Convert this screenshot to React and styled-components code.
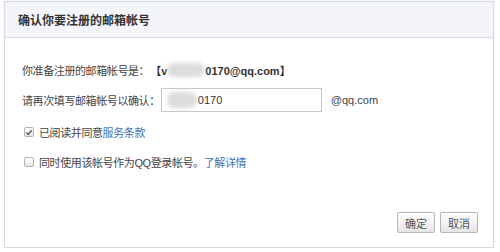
import React from "react";
import styled, { createGlobalStyle, css } from "styled-components";

const GlobalStyle = createGlobalStyle`
  html, body {
    margin: 0;
    padding: 0;
    background: #fff;
  }
  body {
    font-family: "Liberation Sans", "Noto Sans CJK SC", sans-serif;
    font-size: 11px;
    color: #333;
  }
`;

const App = () => {
  return (
    <>
      <GlobalStyle />
      <Dialog>
        <Header>
          <Title>确认你要注册的邮箱帐号</Title>
        </Header>
        <Body>
          <Row top={22}>
            <Label>你准备注册的邮箱帐号是：</Label>
            <Strong>
              【v<Blob w={38} />0170@qq.com】
            </Strong>
          </Row>
          <Row top={8}>
            <Label>请再次填写邮箱帐号以确认：</Label>
            <InputBox>
              <Blob w={30} h={16} />
              0170
            </InputBox>
            <Suffix>@qq.com</Suffix>
          </Row>
          <Row top={10} indent>
            <Check checked>
              <svg width="9" height="9" viewBox="0 0 9 9">
                <path d="M1.5 4.6 L3.6 6.7 L7.6 2" fill="none" stroke="#555" strokeWidth="1.5" />
              </svg>
            </Check>
            <Label>
              已阅读并同意<Link>服务条款</Link>
            </Label>
          </Row>
          <Row top={10} indent>
            <Check />
            <Label>
              同时使用该帐号作为QQ登录帐号。<Link>了解详情</Link>
            </Label>
          </Row>
          <Footer>
            <Button>确定</Button>
            <Button>取消</Button>
          </Footer>
        </Body>
      </Dialog>
    </>
  );
};

export default App;

const Dialog = styled.div`
  box-sizing: border-box;
  margin: 1px 0 0 4px;
  width: 490px;
  height: 247px;
  border: 1px solid #d6dae3;
  box-shadow: 0 0 1px rgba(180, 186, 200, 0.6);
  display: flex;
  flex-direction: column;
  background: #fff;
`;

const Header = styled.div`
  height: 35px;
  background: #f4f5f8;
  border-bottom: 1px solid #d8dde7;
  display: flex;
  align-items: center;
  padding-left: 13px;
`;

const Title = styled.div`
  font-family: "Noto Sans CJK SC", sans-serif;
  font-size: 12px;
  font-weight: bold;
  color: #333;
`;

const Body = styled.div`
  flex: 1;
  display: flex;
  flex-direction: column;
  padding: 0 15px 14px 17px;
`;

const Row = styled.div`
  display: flex;
  align-items: center;
  min-height: 20px;
  margin-top: ${(p) => p.top}px;
  ${(p) =>
    p.indent &&
    css`
      padding-left: 2px;
    `}
`;

const Label = styled.span`
  color: #444;
  letter-spacing: -0.4px;
`;

const Strong = styled.span`
  display: inline-flex;
  align-items: center;
  font-weight: bold;
  color: #333;
  margin-left: 1px;
`;

const Blob = styled.span`
  display: inline-block;
  width: ${(p) => p.w}px;
  height: ${(p) => p.h || 14}px;
  border-radius: 8px;
  background: #dcdcdc;
  filter: blur(2px);
`;

const InputBox = styled.div`
  box-sizing: border-box;
  display: flex;
  align-items: center;
  gap: 1px;
  width: 161px;
  height: 24px;
  margin-left: 1px;
  padding-left: 5px;
  border: 1px solid #c9c9c9;
  color: #333;
  font-size: 11px;
`;

const Suffix = styled.span`
  margin-left: 9px;
  color: #444;
`;

const Check = styled.span`
  box-sizing: border-box;
  width: 10px;
  height: 10px;
  margin-right: 5px;
  border: 1px solid #b3b3b3;
  border-radius: 2px;
  background: linear-gradient(#fdfdfd, #e7e7e7);
  display: inline-flex;
  align-items: center;
  justify-content: center;
  svg {
    display: block;
  }
`;

const Link = styled.span`
  color: #3f74b5;
`;

const Footer = styled.div`
  margin-top: auto;
  display: flex;
  justify-content: flex-end;
  gap: 5px;
`;

const Button = styled.button`
  box-sizing: border-box;
  width: 38px;
  height: 21px;
  padding: 0;
  font-family: "Noto Sans CJK SC", sans-serif;
  font-size: 11px;
  color: #555;
  border: 1px solid #b6b6b6;
  border-radius: 2px;
  background: linear-gradient(#ffffff, #e6e6e6);
  box-shadow: inset 0 1px 0 #fff;
`;
